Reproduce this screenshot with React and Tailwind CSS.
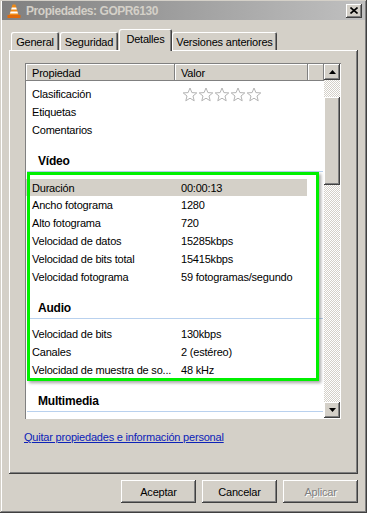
const raised =
  'shadow-[inset_-1px_-1px_#404040,inset_1px_1px_#ffffff,inset_-2px_-2px_#808080,inset_2px_2px_#d4d0c8]';

function VlcIcon() {
  return (
    <svg width="16" height="16" viewBox="0 0 16 16">
      <path d="M6.6 1.5 L9.4 1.5 L12.6 12 L3.4 12 Z" fill="#f08a14" />
      <path d="M5.8 4.6 L10.2 4.6 L10.8 6.6 L5.2 6.6 Z" fill="#ffffff" />
      <path d="M4.6 8.6 L11.4 8.6 L12 10.6 L4 10.6 Z" fill="#ffffff" />
      <path d="M1.5 12 L14.5 12 L14.5 15 L1.5 15 Z" fill="#e06a0a" />
    </svg>
  );
}

function Star() {
  return (
    <svg width="16" height="15" viewBox="0 0 16 15">
      <path
        d="M8 1 L9.9 5.6 L14.8 5.9 L11 9 L12.2 13.8 L8 11.2 L3.8 13.8 L5 9 L1.2 5.9 L6.1 5.6 Z"
        fill="#ffffff"
        stroke="#b4b4b4"
        strokeWidth="1"
        strokeLinejoin="round"
      />
    </svg>
  );
}

function ArrowButton({ down }) {
  return (
    <div className={`h-[16px] w-[16px] bg-[#d4d0c8] flex items-center justify-center ${raised}`}>
      <svg width="7" height="4" viewBox="0 0 7 4" className={down ? 'rotate-180' : ''}>
        <path d="M3.5 0 L7 4 L0 4 Z" fill="#000" />
      </svg>
    </div>
  );
}

function Row({ name, value, active }) {
  if (active) {
    return (
      <div className="h-[18px] pt-[1px]">
        <div className="h-[17px] w-[281px] bg-[#d4d0c8] flex items-center">
          <div className="w-[149px] pl-[6px]">{name}</div>
          <div className="pl-[6px]">{value}</div>
        </div>
      </div>
    );
  }
  return (
    <div className="h-[18px] flex items-center">
      <div className="w-[149px] pl-[6px] whitespace-nowrap">{name}</div>
      <div className="pl-[6px] whitespace-nowrap">{value}</div>
    </div>
  );
}

function Group({ title }) {
  return (
    <div className="h-[39px]">
      <div className="h-[33px] mx-[1px] flex items-end pb-[3px] pl-[11px] border-b border-[#b9d1ee] font-bold text-[12px] leading-[14px]">
        {title}
      </div>
    </div>
  );
}

function Tab({ label, width, active }) {
  return (
    <div
      className={`flex items-center justify-center bg-[#d4d0c8] rounded-t-[2px] shadow-[inset_1px_1px_#ffffff,inset_-1px_0_#404040,inset_-2px_0_#808080] ${
        active ? 'h-[22px] -mb-[1px] pb-[3px] relative z-10' : 'h-[18px] pt-[1px]'
      }`}
      style={{ width }}
    >
      {label}
    </div>
  );
}

function Button({ label, disabled }) {
  return (
    <div
      className={`w-[75px] h-[23px] flex items-center justify-center bg-[#d4d0c8] ${raised} ${
        disabled ? 'text-[#808080] [text-shadow:1px_1px_#ffffff]' : ''
      }`}
    >
      {label}
    </div>
  );
}

export default function App() {
  return (
    <div className="w-[367px] h-[513px] bg-[#d4d0c8] overflow-hidden flex flex-col text-[11px] leading-[14px] tracking-[-0.2px] text-black font-['Liberation_Sans',Arial,sans-serif] shadow-[inset_-1px_-1px_#404040,inset_1px_1px_#d4d0c8,inset_-2px_-2px_#808080,inset_2px_2px_#ffffff]">
      {/* Title bar */}
      <div className="mx-[2px] mt-[1px] h-[19px] flex items-center bg-gradient-to-r from-[#808080] to-[#c0c0c0] pl-[4px] pr-[3px]">
        <VlcIcon />
        <span className="ml-[4px] font-bold text-[12px] tracking-[-0.45px] text-[#d4d0c8]">
          Propiedades: GOPR6130
        </span>
        <div className={`ml-auto w-[16px] h-[14px] bg-[#d4d0c8] flex items-center justify-center ${raised}`}>
          <svg width="8" height="7" viewBox="0 0 8 7">
            <path d="M0.5 0.5 L7.5 6.5 M7.5 0.5 L0.5 6.5" stroke="#000" strokeWidth="1.6" />
          </svg>
        </div>
      </div>

      {/* Tabs */}
      <div className="mt-[9px] h-[21px] pl-[11px] flex items-end">
        <Tab label="General" width={48} />
        <div className="w-[1px]" />
        <Tab label="Seguridad" width={58} />
        <div className="w-[1px]" />
        <Tab label="Detalles" width={53} active />
        <Tab label="Versiones anteriores" width={105} />
      </div>

      {/* Panel */}
      <div className="ml-[9px] w-[349px] h-[424px] flex flex-col shadow-[inset_-1px_-1px_#404040,inset_1px_1px_#ffffff,inset_-2px_-2px_#808080]">
        <div className="relative ml-[16px] mt-[13px] w-[316px] h-[356px] p-[1px] bg-white shadow-[inset_1px_1px_#808080,inset_-1px_-1px_#ffffff] flex">
          <div className="w-[298px] h-[354px] overflow-hidden flex flex-col">
            <div className="h-[17px] flex shrink-0 bg-[#d4d0c8]">
              <div className="w-[149px] pl-[6px] flex items-center shadow-[inset_-1px_-1px_#808080,inset_1px_1px_#ffffff]">
                Propiedad
              </div>
              <div className="w-[133px] pl-[6px] flex items-center shadow-[inset_-1px_-1px_#808080,inset_1px_1px_#ffffff]">
                Valor
              </div>
              <div className="flex-1 shadow-[inset_-1px_-1px_#808080,inset_1px_1px_#ffffff]" />
            </div>
            <div className="h-[4px] shrink-0" />
            <div className="h-[18px] flex items-center shrink-0">
              <div className="w-[149px] pl-[6px]">Clasificación</div>
              <div className="pl-[7px] flex">
                <Star />
                <Star />
                <Star />
                <Star />
                <Star />
              </div>
            </div>
            <Row name="Etiquetas" value="" />
            <Row name="Comentarios" value="" />
            <Group title="Vídeo" />
            <Row name="Duración" value="00:00:13" active />
            <Row name="Ancho fotograma" value="1280" />
            <Row name="Alto fotograma" value="720" />
            <Row name="Velocidad de datos" value="15285kbps" />
            <Row name="Velocidad de bits total" value="15415kbps" />
            <Row name="Velocidad fotograma" value="59 fotogramas/segundo" />
            <Group title="Audio" />
            <Row name="Velocidad de bits" value="130kbps" />
            <Row name="Canales" value="2 (estéreo)" />
            <Row name="Velocidad de muestra de so..." value="48 kHz" />
            <div className="shrink-0">
              <Group title="Multimedia" />
            </div>
          </div>

          {/* Scrollbar */}
          <div className="w-[16px] h-[354px] flex flex-col">
            <ArrowButton />
            <div className="h-[17px] bg-[repeating-conic-gradient(#ffffff_0_25%,#d4d0c8_0_50%)] bg-[length:2px_2px]" />
            <div className={`h-[88px] bg-[#d4d0c8] ${raised}`} />
            <div className="flex-1 bg-[repeating-conic-gradient(#ffffff_0_25%,#d4d0c8_0_50%)] bg-[length:2px_2px]" />
            <ArrowButton down />
          </div>

          {/* Highlight annotation */}
          <div className="absolute left-[2px] top-[109px] w-[292px] h-[209px] border-[3px] border-[#00f000] shadow-[2px_2px_3px_rgba(0,0,0,0.35)] pointer-events-none" />
        </div>

        <a href="#" className="ml-[15px] mt-[11px] self-start underline text-[#0c22b8]">
          Quitar propiedades e información personal
        </a>
      </div>

      {/* Buttons */}
      <div className="mt-[6px] pr-[9px] flex justify-end gap-[6px]">
        <Button label="Aceptar" />
        <Button label="Cancelar" />
        <Button label="Aplicar" disabled />
      </div>
    </div>
  );
}
